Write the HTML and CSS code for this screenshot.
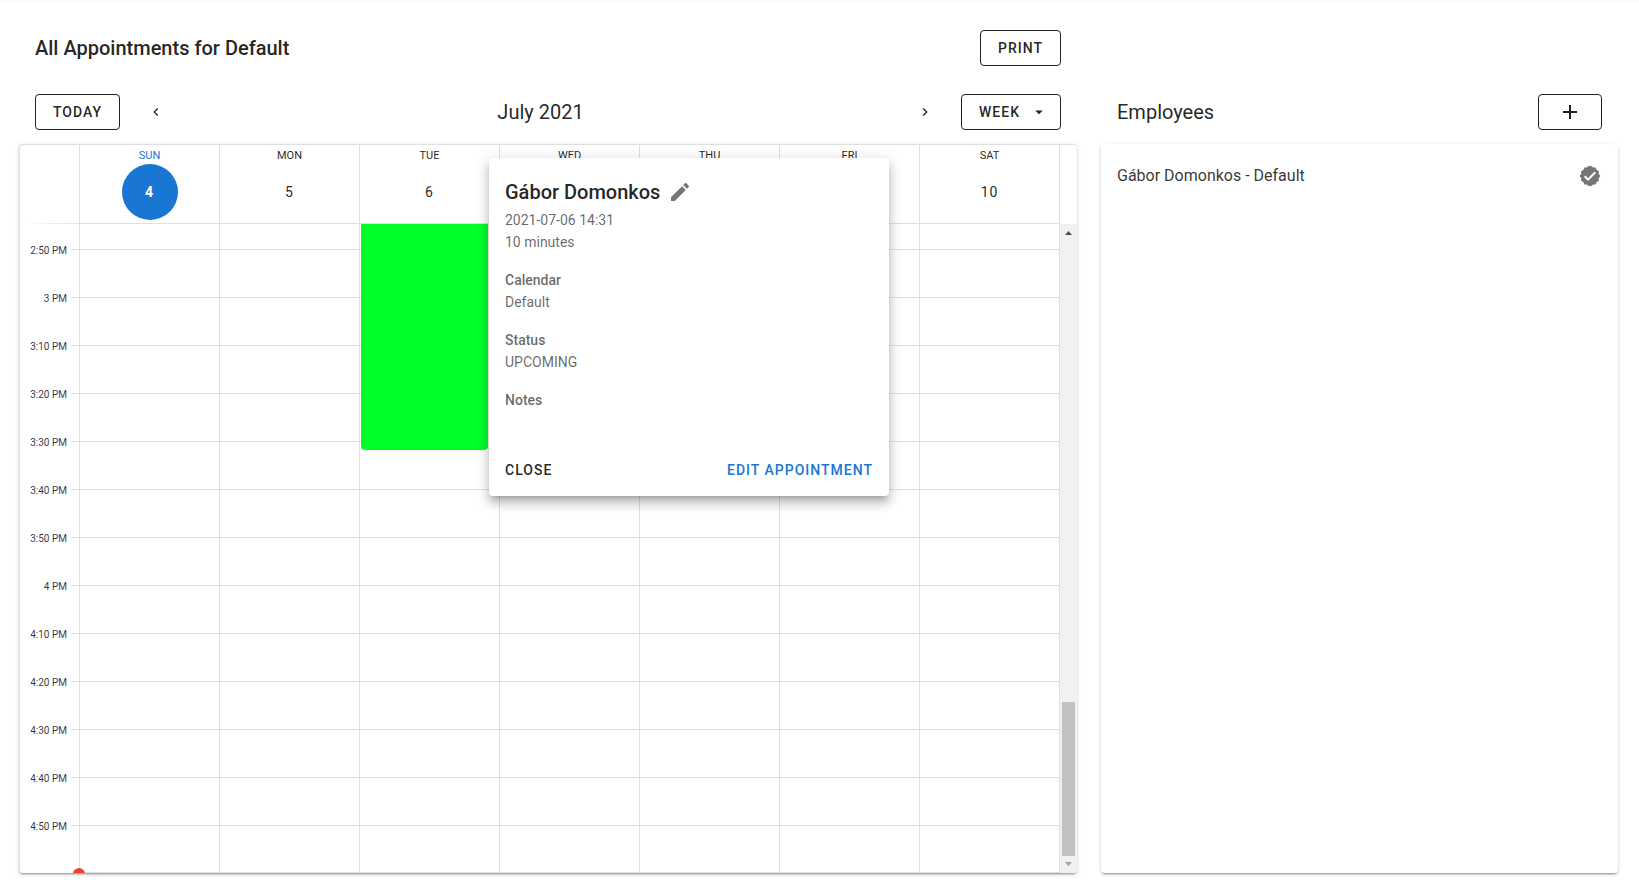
FILE: index.html
```html
<!DOCTYPE html>
<html lang="en">
<head>
<meta charset="utf-8">
<title>Appointments</title>
<link rel="stylesheet" href="styles.css">
</head>
<body>
<main class="page">
  <section class="col col-main">
    <header class="toolbar">
      <h1 class="title strong">All Appointments for Default</h1>
      <button class="btn outlined" type="button">Print</button>
    </header>
    <div class="toolbar">
      <button class="btn outlined" type="button">Today</button>
      <button class="icon-btn" type="button" aria-label="Previous week"><svg class="icon small" viewBox="0 0 24 24"><path d="M15.41,16.58L10.83,12L15.41,7.41L14,6L8,12L14,18L15.41,16.58Z"/></svg></button>
      <h2 class="title month">July 2021</h2>
      <button class="icon-btn" type="button" aria-label="Next week"><svg class="icon small" viewBox="0 0 24 24"><path d="M8.59,16.58L13.17,12L8.59,7.41L10,6L16,12L10,18L8.59,16.58Z"/></svg></button>
      <div class="picker">
        <select class="btn outlined picker-select" aria-label="Calendar view"><option>Week</option></select>
        <svg class="icon caret" viewBox="0 0 24 24"><path d="M7,10L12,15L17,10H7Z"/></svg>
      </div>
    </div>

    <div class="card calendar">
      <div class="cal-head">
        <div class="gutter-head"></div>
        <div class="day-head today"><span class="weekday">Sun</span><button class="day-num" type="button">4</button></div>
        <div class="day-head"><span class="weekday">Mon</span><button class="day-num" type="button">5</button></div>
        <div class="day-head"><span class="weekday">Tue</span><button class="day-num" type="button">6</button></div>
        <div class="day-head"><span class="weekday">Wed</span><button class="day-num" type="button">7</button></div>
        <div class="day-head"><span class="weekday">Thu</span><button class="day-num" type="button">8</button></div>
        <div class="day-head"><span class="weekday">Fri</span><button class="day-num" type="button">9</button></div>
        <div class="day-head"><span class="weekday">Sat</span><button class="day-num" type="button">10</button></div>
        <div class="scroll-head"></div>
      </div>
      <div class="cal-body">
        <div class="gutter">
          <div class="slot">2:50 PM</div>
          <div class="slot">3 PM</div>
          <div class="slot">3:10 PM</div>
          <div class="slot">3:20 PM</div>
          <div class="slot">3:30 PM</div>
          <div class="slot">3:40 PM</div>
          <div class="slot">3:50 PM</div>
          <div class="slot">4 PM</div>
          <div class="slot">4:10 PM</div>
          <div class="slot">4:20 PM</div>
          <div class="slot">4:30 PM</div>
          <div class="slot">4:40 PM</div>
          <div class="slot">4:50 PM</div>
        </div>
        <div class="day"><span class="now-dot"></span></div>
        <div class="day"></div>
        <div class="day"><div class="event"></div></div>
        <div class="day"></div>
        <div class="day"></div>
        <div class="day"></div>
        <div class="day"></div>
        <div class="scrollbar">
          <svg class="arrow" viewBox="0 0 17 17"><path fill="#505050" d="M5 11L8.500 7L12 11Z"/></svg>
          <div class="thumb"></div>
          <svg class="arrow" viewBox="0 0 17 17"><path fill="#a3a3a3" d="M5 6L8.500 10L12 6Z"/></svg>
        </div>
      </div>

      <div class="popup" role="dialog" aria-labelledby="popup-name">
        <div class="popup-title">
          <h2 class="title strong" id="popup-name">Gábor Domonkos</h2>
          <svg class="icon muted" viewBox="0 0 24 24"><path d="M20.71,7.04C21.1,6.65 21.1,6 20.71,5.63L18.37,3.29C18,2.9 17.35,2.9 16.96,3.29L15.12,5.12L18.87,8.87M3,17.25V21H6.75L17.81,9.93L14.06,6.18L3,17.25Z"/></svg>
        </div>
        <div class="popup-text">
          <p>2021-07-06 14:31<br>10 minutes</p>
          <p><strong>Calendar</strong><br>Default</p>
          <p><strong>Status</strong><br>UPCOMING</p>
          <p><strong>Notes</strong></p>
        </div>
        <div class="popup-actions">
          <button class="btn flat" type="button">Close</button>
          <button class="btn flat primary" type="button">Edit appointment</button>
        </div>
      </div>
    </div>
  </section>

  <section class="col col-side">
    <header class="toolbar">
      <h2 class="title">Employees</h2>
      <button class="btn outlined add" type="button" aria-label="Add employee"><svg class="icon" viewBox="0 0 24 24"><path d="M19,13H13V19H11V13H5V11H11V5H13V11H19V13Z"/></svg></button>
    </header>
    <div class="card">
      <ul class="people">
        <li class="person"><span>Gábor Domonkos - Default</span><svg class="icon muted" viewBox="0 0 24 24"><path d="M22.500,12L20.600,9.800L21,7.200L18.700,5.900L17.700,3.500L15.100,3.600L13.300,1.700L12,2.300L10.700,1.700L8.900,3.600L6.300,3.500L5.300,5.900L3,7.200L3.400,9.800L1.500,12L3.400,14.200L3,16.800L5.300,18.100L6.300,20.500L8.900,20.400L10.700,22.300L12,21.700L13.300,22.300L15.100,20.400L17.700,20.500L18.700,18.100L21,16.800L20.600,14.200L22.500,12M10,17L6,13L7.410,11.590L10,14.170L16.590,7.580L18,9L10,17Z"/></svg></li>
      </ul>
    </div>
  </section>
</main>
</body>
</html>
```
FILE: styles.css
```css
*, *::before, *::after { box-sizing: border-box; }

body {
  margin: 0;
  background: #fff linear-gradient(#f8f8f8, #fff) top / 100% 4px no-repeat;
  color: rgba(0, 0, 0, 0.87);
  font: 400 16px/24px Roboto, "Liberation Sans", sans-serif;
}

h1, h2, p, ul { margin: 0; padding: 0; }

.page { display: flex; padding: 16px 9px 16px 7px; }
.col { display: flex; flex-direction: column; padding: 0 12px; min-width: 0; }
.col-main { flex: 0 0 66.6667%; }
.col-side { flex: 1; padding-top: 64px; }

.toolbar {
  display: flex;
  align-items: center;
  justify-content: space-between;
  height: 64px;
  padding: 0 16px;
}
.title { font-size: 20px; line-height: 32px; font-weight: 400; }
.strong { font-weight: 500; }
.month { flex: 1; text-align: center; }

.btn {
  height: 36px;
  margin: 0;
  padding: 0 17px;
  border: 0;
  border-radius: 4px;
  background: none;
  color: inherit;
  font: 500 14px/16px Roboto, "Liberation Sans", sans-serif;
  letter-spacing: 1px;
  text-transform: uppercase;
}
.outlined { border: 1px solid rgba(0, 0, 0, 0.87); }
.icon-btn {
  display: flex;
  align-items: center;
  justify-content: center;
  width: 40px;
  height: 40px;
  margin: 0 16px;
  padding: 0;
  border: 0;
  background: none;
  color: inherit;
}
.add { display: flex; align-items: center; justify-content: center; width: 64px; }
.icon { display: block; width: 24px; height: 24px; fill: currentColor; }
.small { width: 16px; height: 16px; }
.muted { color: rgba(0, 0, 0, 0.54); }

.picker { position: relative; }
.picker-select { display: block; appearance: none; padding-right: 40px; }
.caret {
  position: absolute;
  top: 9px;
  right: 13px;
  width: 18px;
  height: 18px;
  pointer-events: none;
}

.card {
  flex: 1;
  position: relative;
  border-radius: 4px;
  background: #fff;
  box-shadow: 0 3px 1px -2px rgba(0, 0, 0, 0.2), 0 2px 2px 0 rgba(0, 0, 0, 0.14), 0 1px 5px 0 rgba(0, 0, 0, 0.12);
}
.calendar { border: solid #e0e0e0; border-width: 1px 0 0 1px; }

.cal-head, .cal-body {
  display: grid;
  grid-template-columns: 60px repeat(7, minmax(0, 1fr)) 17px;
}
.gutter-head {
  border-right: 1px solid #e0e0e0;
  background: linear-gradient(to right, transparent, #e0e0e0) bottom / 100% 1px no-repeat;
}
.day-head {
  display: flex;
  flex-direction: column;
  align-items: center;
  padding: 3px 0;
  border: solid #e0e0e0;
  border-width: 0 1px 1px 0;
}
.weekday { font-size: 11px; line-height: 16px; text-transform: uppercase; }
.day-num {
  width: 56px;
  height: 56px;
  padding: 0;
  border: 0;
  border-radius: 50%;
  background: none;
  color: inherit;
  font: 400 14px/16px Roboto, "Liberation Sans", sans-serif;
  letter-spacing: 1px;
}
.today .weekday { color: #1976d2; }
.today .day-num { background: #1976d2; color: #fff; font-weight: 700; }

.cal-body { overflow: hidden; border-radius: 0 0 4px 4px; }
.gutter { padding-top: 25px; border-right: 1px solid #e0e0e0; }
.slot {
  height: 48px;
  padding-right: 12px;
  background: linear-gradient(#e0e0e0, #e0e0e0) top right / 8px 1px no-repeat;
  color: rgba(0, 0, 0, 0.8);
  font-size: 10px;
  line-height: 4px;
  text-align: right;
}
.day {
  position: relative;
  padding: 0 11px 0 1px;
  border: solid #e0e0e0;
  border-width: 0 1px 1px 0;
  background: repeating-linear-gradient(#e0e0e0 0 1px, transparent 1px 48px) 0 25px no-repeat;
}
.event { height: 226px; border-radius: 0 0 4px 4px; background: #00ff29; }
.now-dot {
  position: absolute;
  left: -7px;
  bottom: -8px;
  width: 12px;
  height: 12px;
  border-radius: 50%;
  background: #ea4335;
}

.scrollbar {
  display: flex;
  flex-direction: column;
  align-items: center;
  background: #f1f1f1;
}
.arrow { display: block; width: 17px; height: 17px; }
.thumb { width: 13px; height: 154px; margin-top: auto; background: #c1c1c1; }

.popup {
  position: absolute;
  top: 13px;
  left: 469px;
  width: 400px;
  padding: 18px 8px 8px;
  border-radius: 4px;
  background: #fff;
  box-shadow: 0 5px 5px -3px rgba(0, 0, 0, 0.2), 0 8px 10px 1px rgba(0, 0, 0, 0.14), 0 3px 14px 2px rgba(0, 0, 0, 0.12);
}
.popup-title { display: flex; align-items: center; gap: 8px; padding: 0 8px 1px; }
.popup-text { padding: 0 8px; color: rgba(0, 0, 0, 0.6); font-size: 14px; line-height: 22px; }
.popup-text p { margin-bottom: 16px; }
.popup-text strong { font-weight: 500; }
.popup-actions { display: flex; justify-content: space-between; padding-top: 25px; }
.flat { padding: 0 8px; }
.primary { color: #1976d2; }

.people { padding: 8px 0; list-style: none; }
.person {
  display: flex;
  align-items: center;
  justify-content: space-between;
  height: 48px;
  padding: 0 16px;
  color: rgba(0, 0, 0, 0.8);
}
```
